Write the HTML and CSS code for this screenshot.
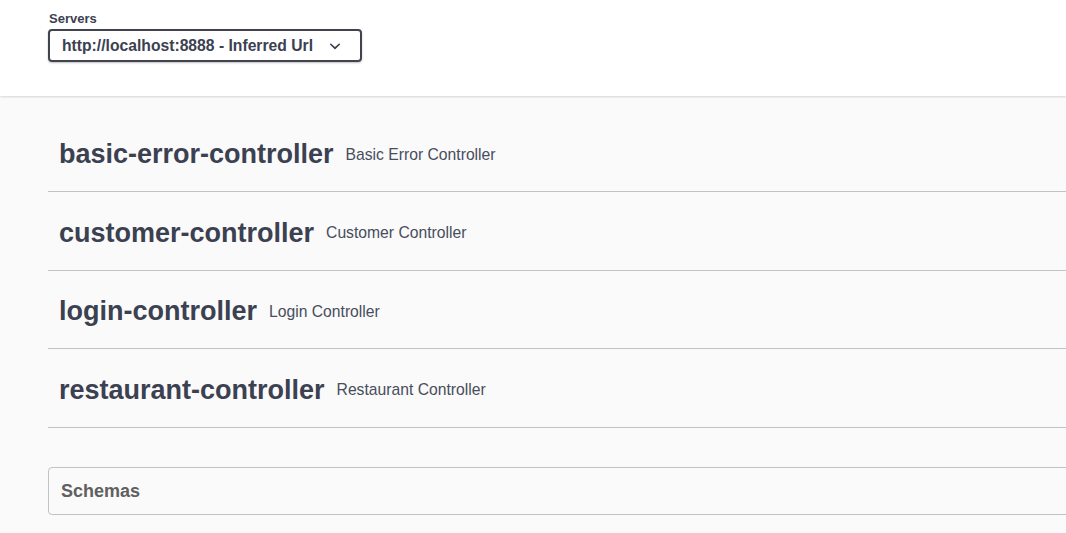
FILE: index.html
```html
<!DOCTYPE html>
<html>
<head>
<meta charset="utf-8">
<link rel="stylesheet" href="styles.css">
</head>
<body>
<div class="scheme-container">
  <div class="servers">
    <span class="servers-title">Servers</span>
    <div class="select">
      <span class="select-text">http://localhost:8888 - Inferred Url</span>
      <svg class="chevron" width="22" height="22" viewBox="0 0 20 20"><path d="M13.418 7.859a.695.695 0 01.978 0 .68.68 0 010 .969l-3.908 3.83a.697.697 0 01-.979 0l-3.908-3.83a.68.68 0 010-.969.695.695 0 01.978 0L10 11l3.418-3.141z" fill="#3b4151"/></svg>
    </div>
  </div>
</div>
<div class="wrapper">
  <div class="tag"><span class="tag-name">basic-error-controller</span><small class="tag-desc">Basic Error Controller</small></div>
  <div class="tag"><span class="tag-name">customer-controller</span><small class="tag-desc">Customer Controller</small></div>
  <div class="tag"><span class="tag-name">login-controller</span><small class="tag-desc">Login Controller</small></div>
  <div class="tag"><span class="tag-name">restaurant-controller</span><small class="tag-desc">Restaurant Controller</small></div>
  <div class="models"><h4 class="models-title">Schemas</h4></div>
</div>
</body>
</html>
```
FILE: styles.css
```css
html, body {
  margin: 0;
  padding: 0;
}
body {
  background: #fafafa;
  font-family: "Liberation Sans", Arial, sans-serif;
  color: #3b4151;
  overflow: hidden;
}
.scheme-container {
  background: #fff;
  height: 96px;
  box-shadow: 0 1px 2px 0 rgba(0,0,0,.15);
  padding-left: 48px;
  box-sizing: border-box;
  position: relative;
}
.servers {
  display: flex;
  flex-direction: column;
  padding-top: 11px;
}
.servers-title {
  font-size: 13px;
  font-weight: bold;
  line-height: 16px;
  margin-left: 1px;
  margin-bottom: 2px;
}
.select {
  width: 314px;
  height: 33px;
  box-sizing: border-box;
  border: 2px solid #41444e;
  border-radius: 4px;
  box-shadow: 0 1px 2px 0 rgba(0,0,0,.25);
  display: flex;
  align-items: center;
  padding: 0 14px 0 12px;
}
.select-text {
  flex: 1;
  font-size: 15.7px;
  font-weight: bold;
  color: #3b4151;
}
.chevron {
  display: block;
}
.wrapper {
  padding: 22px 0 0 48px;
  width: 1200px;
}
.tag {
  height: 73px;
  border-bottom: 1px solid rgba(59,65,81,.3);
  margin-bottom: 4.67px;
  display: flex;
  align-items: center;
  padding-left: 11px;
}
.tag-name {
  font-size: 27px;
  font-weight: bold;
  color: #3b4151;
}
.tag-desc {
  font-size: 15.7px;
  padding-left: 12px;
  color: #474d5c;
}
.models {
  margin-top: 39px;
  border: 1px solid rgba(59,65,81,.3);
  border-radius: 4px;
  height: 48px;
  box-sizing: border-box;
  display: flex;
  align-items: center;
}
.models-title {
  margin: 0;
  padding: 2px 0 0 12px;
  font-size: 18px;
  font-weight: bold;
  color: #606060;
}
```
